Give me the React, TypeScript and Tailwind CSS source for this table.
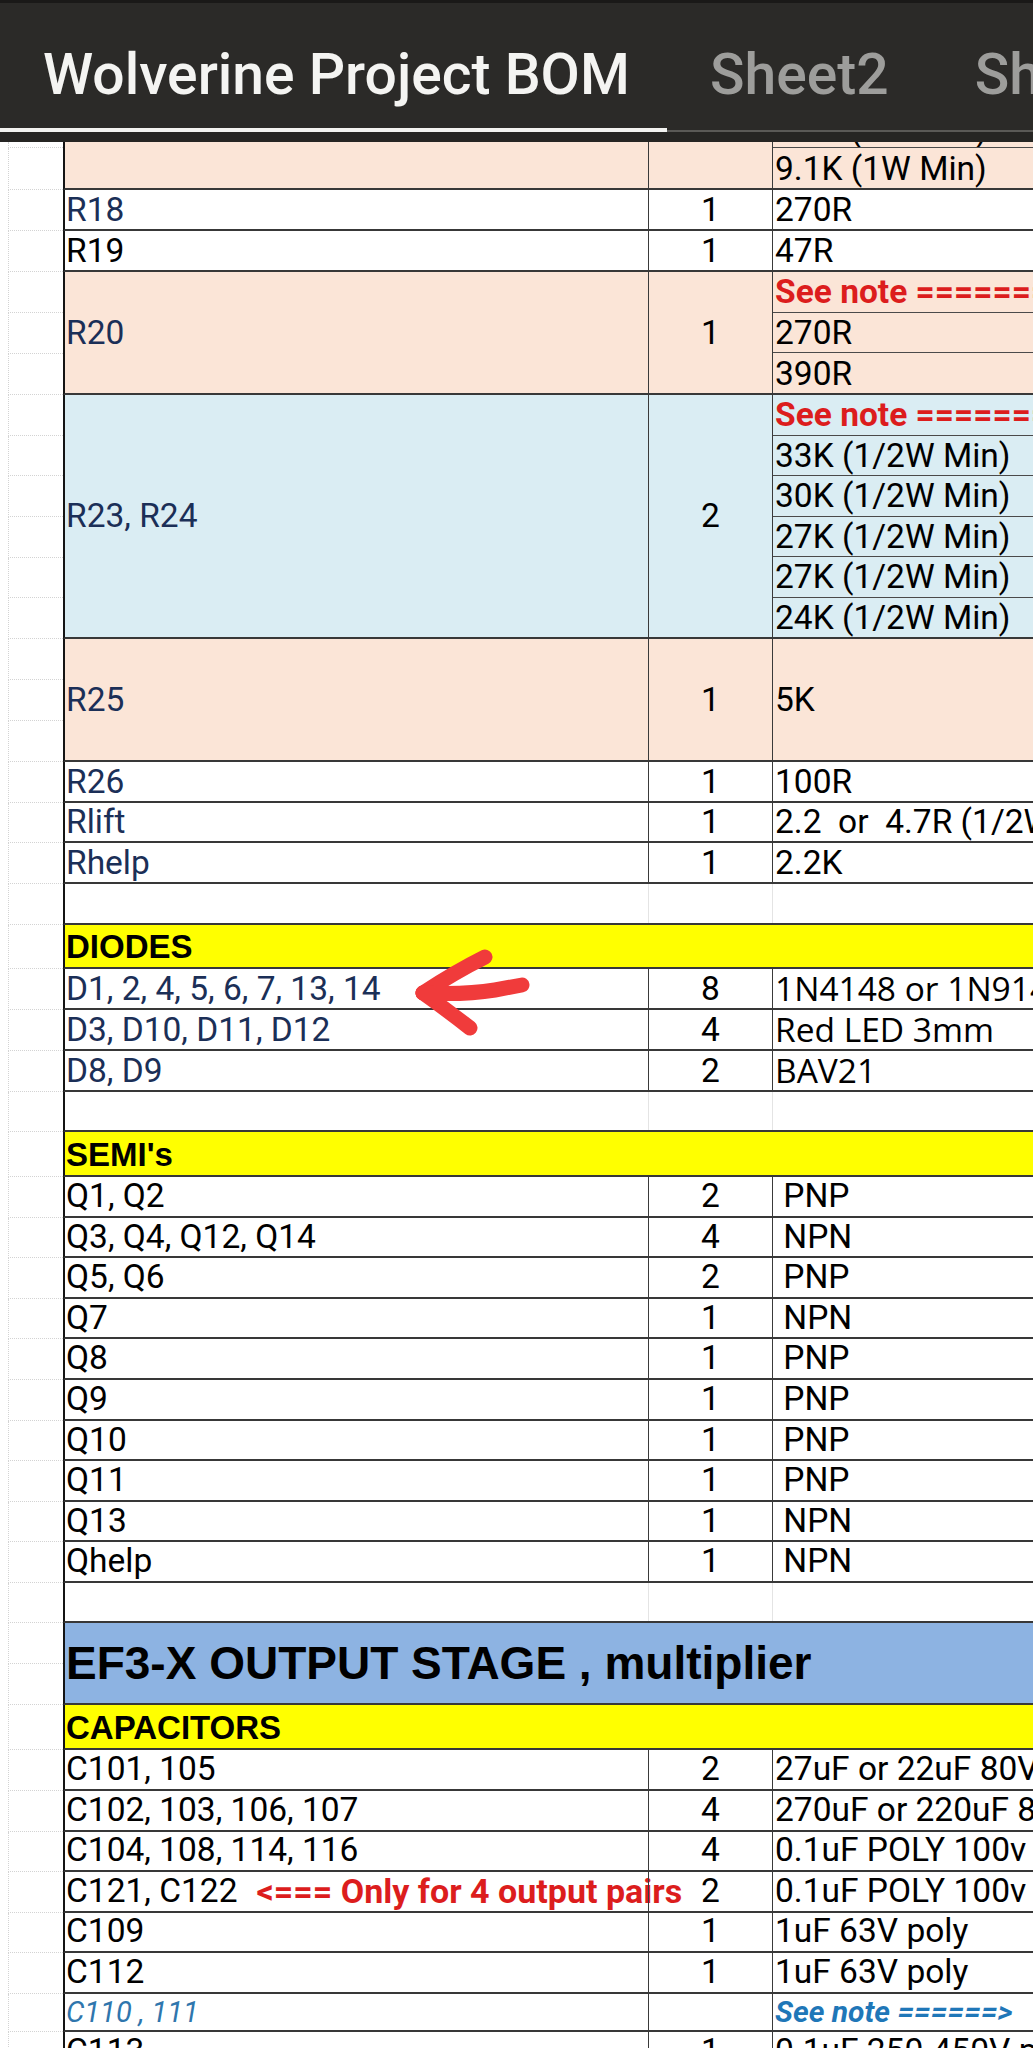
import * as React from "react";

const NAVY = "text-[#1b2f57]";
const BLACK = "text-black";
const RED = "text-[#dc1d1d]";
const PEACH = "bg-[#fbe5d7]";
const ICE = "bg-[#daedf3]";

function Gutter({ n, lead = false }: { n: number; lead?: boolean }) {
  return (
    <div className="w-[63px] shrink-0 flex flex-col pl-[8px]">
      {lead && <div className="h-[6px] shrink-0 border-l border-b border-dotted border-[#d3d3d3]" />}
      {Array.from({ length: n }).map((_, i) => (
        <div key={i} className="flex-1 border-l border-b border-dotted border-[#d3d3d3]" />
      ))}
    </div>
  );
}

interface RowProps {
  h: string;
  n?: number;
  bg?: string;
  lead?: boolean;
  children?: React.ReactNode;
}

function Row({ h, n = 1, bg = "bg-white", lead = false, children }: RowProps) {
  return (
    <div className={`flex shrink-0 ${h}`}>
      <Gutter n={n} lead={lead} />
      <div className={`flex flex-1 min-w-0 border-l-2 border-b-2 border-l-[#141414] border-b-[#383838] ${bg}`}>
        {children}
      </div>
    </div>
  );
}

function A({ children, tone = NAVY, mid = false }: { children?: React.ReactNode; tone?: string; mid?: boolean }) {
  return (
    <div className={`w-[583px] shrink-0 flex pl-[1px] whitespace-pre ${mid ? "items-center" : "items-end pb-[3px]"} ${tone}`}>
      {children}
    </div>
  );
}

function B({ children, mid = false, grid = false }: { children?: React.ReactNode; mid?: boolean; grid?: boolean }) {
  return (
    <div
      className={`relative w-[125px] shrink-0 flex justify-center border-x ${grid ? "border-[#e4e4e4]" : "border-[#3a3a3a]"} ${mid ? "items-center" : "items-end pb-[3px]"}`}
    >
      {children}
    </div>
  );
}

function C({ children, mid = false, className = "" }: { children?: React.ReactNode; mid?: boolean; className?: string }) {
  return (
    <div className={`flex-1 min-w-0 overflow-hidden whitespace-pre flex pl-[2px] ${mid ? "items-center" : "items-end pb-[3px]"} ${className}`}>
      {children}
    </div>
  );
}

function Subs({ items }: { items: React.ReactNode[] }) {
  return (
    <div className="flex-1 min-w-0 flex flex-col">
      {items.map((t, i) => (
        <div
          key={i}
          className={`flex-1 flex items-end pb-[3px] pl-[2px] whitespace-pre overflow-hidden ${i < items.length - 1 ? "border-b border-[#4a4a4a]" : ""}`}
        >
          {t}
        </div>
      ))}
    </div>
  );
}

function Blank({ h }: { h: string }) {
  return (
    <Row h={h}>
      <A />
      <B grid />
      <C />
    </Row>
  );
}

function Heading({ h, n = 1, bg = "bg-[#ffff00]", big = false, children }: RowProps & { big?: boolean }) {
  return (
    <Row h={h} n={n} bg={bg}>
      <div
        className={`flex-1 flex pl-[1px] font-['Liberation_Sans'] font-bold whitespace-nowrap text-black ${big ? "items-center text-[46px]" : "items-end pb-[4px] text-[33px]"}`}
      >
        {children}
      </div>
    </Row>
  );
}

const seeNote = <span className={`font-bold ${RED}`}>See note =======&gt;</span>;

const semis: [string, string, string][] = [
  ["Q1, Q2", "2", " PNP"],
  ["Q3, Q4, Q12, Q14", "4", " NPN"],
  ["Q5, Q6", "2", " PNP"],
  ["Q7", "1", " NPN"],
  ["Q8", "1", " PNP"],
  ["Q9", "1", " PNP"],
  ["Q10", "1", " PNP"],
  ["Q11", "1", " PNP"],
  ["Q13", "1", " NPN"],
  ["Qhelp", "1", " NPN"],
];

function Arrow() {
  return (
    <svg
      className="absolute left-[405px] top-[940px] pointer-events-none"
      width="130"
      height="100"
      viewBox="0 0 130 100"
      fill="none"
      stroke="#f03b3b"
      strokeWidth="15"
      strokeLinecap="round"
      strokeLinejoin="round"
    >
      <path d="M80 17 Q50 32 18 53" />
      <path d="M18 53 Q42 70 65 88" />
      <path d="M18 53 Q60 55 90 50 Q106 47 117 45" />
    </svg>
  );
}

export default function App() {
  return (
    <div className="relative w-[1033px] h-[2048px] overflow-hidden bg-white font-['Roboto'] text-[33.5px] leading-none text-black">
      <div className="h-[142px] bg-[#2b2a28] flex flex-col">
        <div className="h-[3px] bg-[#1a1918]" />
        <div className="h-[125px] flex items-start pt-[43px] font-['Roboto'] font-medium text-[57px] leading-none whitespace-nowrap overflow-hidden">
          <div className="w-[667px] shrink-0 pl-[43px] text-[#f4f4f2]">Wolverine Project BOM</div>
          <div className="shrink-0 px-[43px] text-[#9d9d9b]">Sheet2</div>
          <div className="shrink-0 pl-[43px] text-[#9d9d9b]">Sheet3</div>
        </div>
        <div className="h-[4px] flex">
          <div className="w-[667px] bg-[#f2f2f0]" />
          <div className="flex-1 self-end h-[2px] bg-[#5a5956]" />
        </div>
        <div className="flex-1 bg-[#262523]" />
      </div>

      <div className="flex flex-col">
        <Row h="h-[48px]" bg={PEACH} lead>
          <A />
          <B />
          <div className="flex-1 min-w-0 flex flex-col">
            <div className="h-[6px] shrink-0 overflow-hidden border-b border-[#4a4a4a] flex items-end pl-[2px] whitespace-pre">
              <span>9.1K (1W Min)</span>
            </div>
            <div className="flex-1 flex items-end pb-[3px] pl-[2px] whitespace-pre">9.1K (1W Min)</div>
          </div>
        </Row>

        <Row h="h-[41px]">
          <A>R18</A>
          <B>1</B>
          <C>270R</C>
        </Row>
        <Row h="h-[41px]">
          <A tone={BLACK}>R19</A>
          <B>1</B>
          <C>47R</C>
        </Row>
        <Row h="h-[123px]" n={3} bg={PEACH}>
          <A mid>R20</A>
          <B mid>1</B>
          <Subs items={[seeNote, "270R", "390R"]} />
        </Row>
        <Row h="h-[244px]" n={6} bg={ICE}>
          <A mid>R23, R24</A>
          <B mid>2</B>
          <Subs
            items={[
              seeNote,
              "33K (1/2W Min)",
              "30K (1/2W Min)",
              "27K (1/2W Min)",
              "27K (1/2W Min)",
              "24K (1/2W Min)",
            ]}
          />
        </Row>
        <Row h="h-[123px]" n={3} bg={PEACH}>
          <A mid>R25</A>
          <B mid>1</B>
          <C mid>5K</C>
        </Row>
        <Row h="h-[41px]">
          <A>R26</A>
          <B>1</B>
          <C>100R</C>
        </Row>
        <Row h="h-[40px]">
          <A>Rlift</A>
          <B>1</B>
          <C>2.2  or  4.7R (1/2W Min)</C>
        </Row>
        <Row h="h-[41px]">
          <A>Rhelp</A>
          <B>1</B>
          <C>2.2K</C>
        </Row>
        <Blank h="h-[41px]" />

        <Heading h="h-[44px]">DIODES</Heading>
        <Row h="h-[41px]">
          <A>D1, 2, 4, 5, 6, 7, 13, 14</A>
          <B>8</B>
          <C className="font-['Open_Sans']">1N4148 or 1N914</C>
        </Row>
        <Row h="h-[41px]">
          <A>D3, D10, D11, D12</A>
          <B>4</B>
          <C className="font-['Open_Sans']">Red LED 3mm</C>
        </Row>
        <Row h="h-[41px]">
          <A>D8, D9</A>
          <B>2</B>
          <C className="font-['Open_Sans']">BAV21</C>
        </Row>
        <Blank h="h-[40px]" />

        <Heading h="h-[45px]">SEMI's</Heading>
        {semis.map(([a, b, c]) => (
          <Row key={a} h="h-[40.6px]">
            <A tone={BLACK}>{a}</A>
            <B>{b}</B>
            <C>{c}</C>
          </Row>
        ))}
        <Blank h="h-[40px]" />

        <Heading h="h-[82px]" n={2} bg="bg-[#8db3e2]" big>
          EF3-X OUTPUT STAGE , multiplier
        </Heading>
        <Heading h="h-[45px]">CAPACITORS</Heading>
        <Row h="h-[41px]">
          <A tone={BLACK}>C101, 105</A>
          <B>2</B>
          <C>27uF or 22uF 80V</C>
        </Row>
        <Row h="h-[41px]">
          <A tone={BLACK}>C102, 103, 106, 107</A>
          <B>4</B>
          <C>270uF or 220uF 80V</C>
        </Row>
        <Row h="h-[40px]">
          <A tone={BLACK}>C104, 108, 114, 116</A>
          <B>4</B>
          <C>0.1uF POLY 100v</C>
        </Row>
        <Row h="h-[41px]">
          <A tone={BLACK}>
            C121, C122
            <span className={`ml-[19px] font-bold text-[34px] ${RED}`}>&lt;=== Only for 4 output pairs</span>
          </A>
          <B>2</B>
          <C>0.1uF POLY 100v</C>
        </Row>
        <Row h="h-[40px]">
          <A tone={BLACK}>C109</A>
          <B>1</B>
          <C>1uF 63V poly</C>
        </Row>
        <Row h="h-[41px]">
          <A tone={BLACK}>C112</A>
          <B>1</B>
          <C>1uF 63V poly</C>
        </Row>
        <Row h="h-[38px]">
          <A tone="text-[#2f76ad]">
            <span className="italic text-[29px]">C110 , 111</span>
          </A>
          <B />
          <C>
            <span className="italic font-bold text-[30px] text-[#1f77b8]">See note ======&gt;</span>
          </C>
        </Row>
        <Row h="h-[41px]">
          <A tone={BLACK}>C113</A>
          <B>1</B>
          <C>0.1uF 250-450V poly</C>
        </Row>
      </div>

      <Arrow />
    </div>
  );
}
